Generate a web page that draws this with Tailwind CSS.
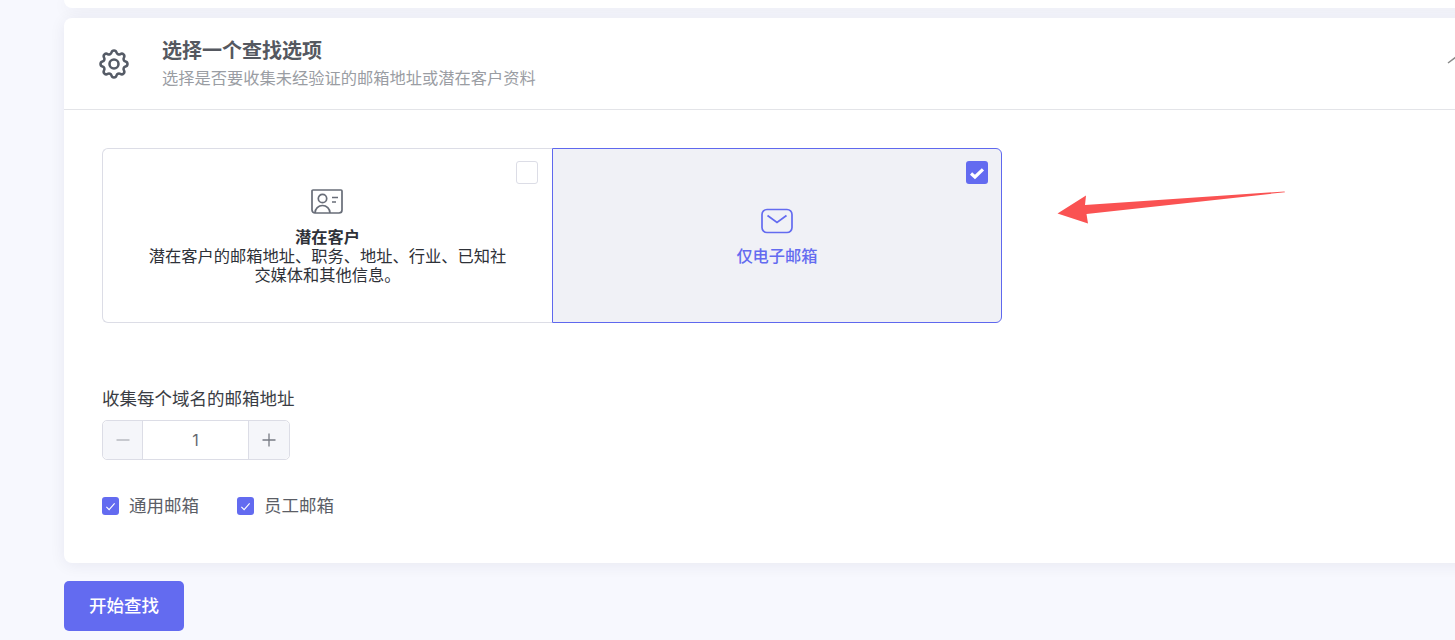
<!DOCTYPE html>
<html lang="zh">
<head>
<meta charset="utf-8">
<script src="https://cdn.jsdelivr.net/npm/@tailwindcss/browser@4"></script>
</head>
<body class="m-0">
<div class="relative h-[640px] w-[1455px] overflow-hidden bg-[#f7f8fe] pl-[64px] font-['Inter','Noto_Sans_CJK_SC',sans-serif]">
  <div class="h-[8px] w-[1420px] rounded-b-[8px] bg-white shadow-[0_2px_16px_rgba(30,35,70,0.07)]"></div>
  <section class="mt-[10px] h-[545px] w-[1420px] rounded-[8px] bg-white shadow-[0_2px_16px_rgba(30,35,70,0.07)]">
    <header class="flex h-[92px] items-center border-b border-[#e3e4e8]">
      <div class="flex w-[98px] justify-center pl-[2px]">
        <svg class="h-[36px] w-[36px] text-[#555b66]" viewBox="0 0 24 24" fill="none" stroke="currentColor" stroke-width="1.7" stroke-linecap="round" stroke-linejoin="round"><path d="M10.33 4.32c.43-1.76 2.92-1.76 3.35 0a1.72 1.72 0 0 0 2.57 1.07c1.54-.94 3.3.83 2.37 2.37a1.72 1.72 0 0 0 1.06 2.57c1.76.43 1.76 2.92 0 3.35a1.72 1.72 0 0 0-1.07 2.57c.94 1.54-.83 3.3-2.37 2.37a1.72 1.72 0 0 0-2.57 1.06c-.43 1.76-2.92 1.76-3.35 0a1.72 1.72 0 0 0-2.57-1.07c-1.54.94-3.3-.83-2.37-2.37a1.72 1.72 0 0 0-1.06-2.57c-1.76-.43-1.76-2.92 0-3.35a1.72 1.72 0 0 0 1.07-2.57c-.94-1.54.83-3.3 2.37-2.37 1 .6 2.3.07 2.57-1.06Z"/><circle cx="12" cy="12" r="3"/></svg>
      </div>
      <div class="pt-[1px]">
        <h2 class="text-[20px] leading-[28px] font-bold text-[#555860]">选择一个查找选项</h2>
        <p class="text-[16.25px] leading-[26px] text-[#9a9da3]">选择是否要收集未经验证的邮箱地址或潜在客户资料</p>
      </div>
      <svg class="ml-auto mr-[15px] mt-[-6px] h-[24px] w-[24px] text-[#8a8a8a]" viewBox="0 0 24 24" fill="none" stroke="currentColor" stroke-width="1.5"><path d="M3 14l8-6 8 6"/></svg>
    </header>
    <div class="px-[38px] pt-[38px]">
      <div class="flex w-[900px]">
        <div class="relative flex h-[175px] w-[450px] flex-col items-center rounded-l-[6px] border border-r-0 border-[#dcdde6] bg-white pt-[39px]">
          <span class="absolute right-[14px] top-[12px] h-[23px] w-[22px] rounded-[3px] border border-[#dcdde6] bg-white"></span>
          <svg class="ml-[-2px] h-[28px] w-[34px] text-[#686d78]" viewBox="0 0 34 28" fill="none" stroke="currentColor" stroke-width="1.7"><path d="M3 2h28a1 1 0 0 1 1 1v19a3 3 0 0 1-3 3H5a3 3 0 0 1-3-3V3a1 1 0 0 1 1-1Z"/><circle cx="12.5" cy="10.5" r="4.2"/><path d="M5 25c0-4.5 3.5-7.5 7.5-7.5S20 20.500 20 25"/><path d="M22 9.500h6M22 14h4"/></svg>
          <p class="mt-[12px] text-center text-[16.25px] leading-[19px] font-bold text-[#2e3138]">潜在客户</p>
          <p class="w-[360px] text-center text-[16.25px] leading-[19px] text-[#2e3138]">潜在客户的邮箱地址、职务、地址、行业、已知社交媒体和其他信息。</p>
        </div>
        <div class="relative flex h-[175px] w-[450px] flex-col items-center rounded-r-[6px] border border-[#5f68ee] bg-[#f0f1f6] pt-[59px]">
          <span class="absolute right-[13px] top-[12px] flex h-[23px] w-[22px] items-center justify-center rounded-[3px] bg-[#636bf0]">
            <svg class="h-[16px] w-[16px] text-white" viewBox="0 0 14 14" fill="none" stroke="currentColor" stroke-width="2.8"><path d="M1.800 7.500l3.400 3L12.200 3.800"/></svg>
          </span>
          <svg class="h-[26px] w-[34px] text-[#636bf0]" viewBox="0 0 34 26" fill="none" stroke="currentColor" stroke-width="1.7"><rect x="2" y="1.500" width="30" height="23" rx="5"/><path d="M7.500 7.500l9.500 7 9.500-7"/></svg>
          <p class="mt-[11px] text-center text-[16.25px] leading-[22px] font-medium text-[#636bf0]">仅电子邮箱</p>
        </div>
      </div>
      <p class="mt-[63px] text-[17.5px] leading-[26px] text-[#3a3d44]">收集每个域名的邮箱地址</p>
      <div class="mt-[8px] flex h-[40px] w-[188px] rounded-[5px] border border-[#dcdde6] text-[#777b84]">
        <span class="flex w-[40px] items-center justify-center rounded-l-[5px] border-r border-[#dcdde6] bg-[#f5f6fa]">
          <svg class="h-[16px] w-[16px] text-[#aeb1b8]" viewBox="0 0 16 16" fill="none" stroke="currentColor" stroke-width="1.3"><path d="M1.500 8h13"/></svg>
        </span>
        <span class="flex flex-1 items-center justify-center text-[16px] text-[#66696f]">1</span>
        <span class="flex w-[41px] items-center justify-center rounded-r-[5px] border-l border-[#dcdde6] bg-[#f5f6fa]">
          <svg class="h-[16px] w-[16px] text-[#777b84]" viewBox="0 0 16 16" fill="none" stroke="currentColor" stroke-width="1.3"><path d="M1.500 8h13M8 1.500v13"/></svg>
        </span>
      </div>
      <div class="mt-[33px] flex items-center text-[17.5px] leading-[26px] text-[#5b5e66]">
        <label class="flex items-center">
          <span class="flex h-[18px] w-[17px] items-center justify-center rounded-[3px] bg-[#636bf0]">
            <svg class="h-[11px] w-[11px] text-white" viewBox="0 0 12 12" fill="none" stroke="currentColor" stroke-width="1.200"><path d="M1.500 6.500l3 3 6-7"/></svg>
          </span>
          <span class="ml-[10px]">通用邮箱</span>
        </label>
        <label class="ml-[38px] flex items-center">
          <span class="flex h-[18px] w-[17px] items-center justify-center rounded-[3px] bg-[#636bf0]">
            <svg class="h-[11px] w-[11px] text-white" viewBox="0 0 12 12" fill="none" stroke="currentColor" stroke-width="1.200"><path d="M1.500 6.500l3 3 6-7"/></svg>
          </span>
          <span class="ml-[10px]">员工邮箱</span>
        </label>
      </div>
    </div>
  </section>
  <button class="mt-[18px] h-[50px] w-[120px] rounded-[5px] bg-[#636bf0] text-[17.5px] font-medium text-white">开始查找</button>
  <svg class="absolute left-[1055px] top-[189px] h-[38px] w-[232px]" viewBox="0 0 232 38" fill="#fa5252"><path d="M2.500 24.500L31 6.500l-1 9.500L229.500 2.500 230 3.200 31.500 25 33 34.500Z"/></svg>
</div>
</body>
</html>
